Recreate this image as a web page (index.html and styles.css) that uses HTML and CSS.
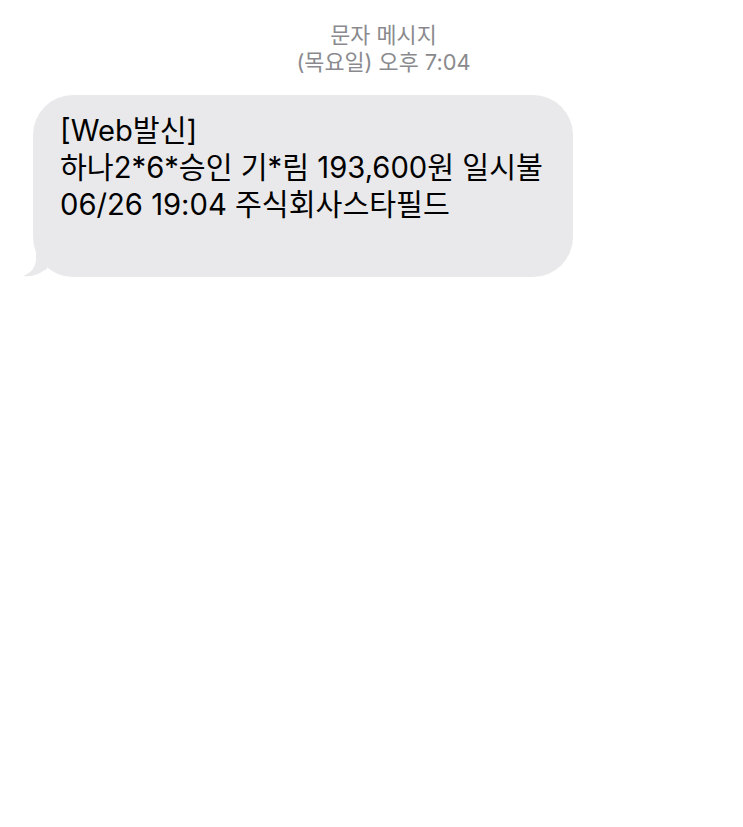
FILE: index.html
```html
<!DOCTYPE html>
<html lang="ko">
<head>
<meta charset="utf-8">
<link rel="stylesheet" href="styles.css">
</head>
<body>
<div class="screen">
  <header class="meta">
    <div class="meta-line">문자 메시지</div>
    <div class="meta-line">(목요일) 오후 7:04</div>
  </header>
  <div class="thread">
    <div class="bubble">
      <svg class="tail" width="24" height="30" viewBox="0 0 24 30" aria-hidden="true">
        <path d="M13 0 L13 12 C13 20 8 26 0 29 C8 30 15 28 20 24 L24 22 L24 0 Z" fill="#e9e9eb"/>
      </svg>
      <p class="msg">[Web발신]<br>하나2*6*승인 기*림 193,600원 일시불<br>06/26 19:04 주식회사스타필드</p>
    </div>
  </div>
</div>
</body>
</html>
```
FILE: styles.css
```css
html, body {
  margin: 0;
  padding: 0;
  background: #ffffff;
}
body {
  font-family: "Inter", "Noto Sans CJK KR", sans-serif;
}
.screen {
  width: 743px;
  height: 827px;
  padding-top: 22px;
  box-sizing: border-box;
}
.meta {
  display: flex;
  flex-direction: column;
  align-items: center;
  padding-left: 24px;
  color: #8a8a8e;
  font-size: 21.8px;
  line-height: 27px;
  letter-spacing: 0;
}
.thread {
  padding: 19px 0 0 33px;
}
.bubble {
  position: relative;
  width: 540px;
  height: 182px;
  box-sizing: border-box;
  background: #e9e9eb;
  border-radius: 40px;
  padding: 17px 20px 0 27px;
}
.tail {
  position: absolute;
  left: -10px;
  bottom: 0;
}
.msg {
  margin: 0;
  color: #000000;
  font-size: 29.2px;
  line-height: 37px;
}
```
